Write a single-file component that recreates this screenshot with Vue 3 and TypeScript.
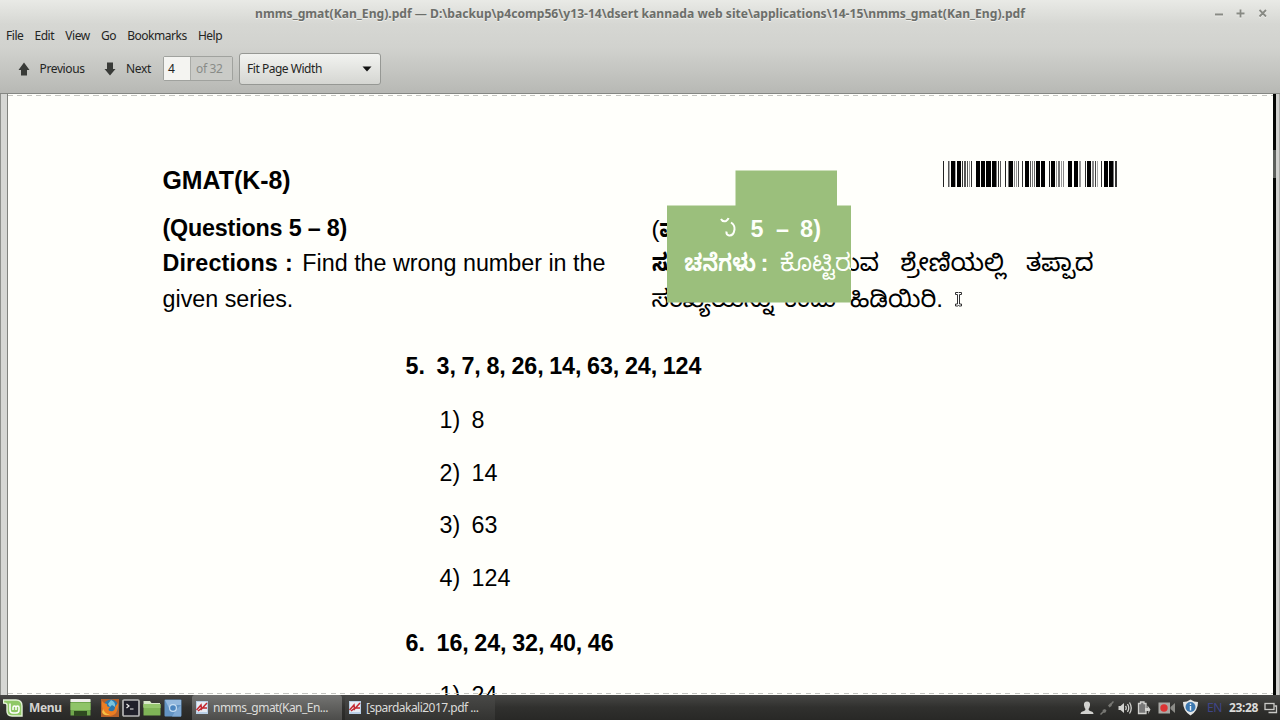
<script setup lang="ts">
interface Word {
  text: string
  x: number
  w: number
  bold?: boolean
}

const menus = ['File', 'Edit', 'View', 'Go', 'Bookmarks', 'Help']

const options = [
  { n: '1)', value: '8' },
  { n: '2)', value: '14' },
  { n: '3)', value: '63' },
  { n: '4)', value: '124' },
]

const tasks = [
  { title: 'nmms_gmat(Kan_En...', active: true },
  { title: '[spardakali2017.pdf ...', active: false },
]

// x and w are relative to the left edge of the Kannada column
const lines: { y: number; words: Word[] }[] = [
  {
    y: 37,
    words: [
      { text: '(', x: 0.5, w: 8 },
      { text: 'ಪ್ರಶ್ನೆಗಳು', x: 8.5, w: 77, bold: true },
      { text: '5', x: 99.5, w: 13, bold: true },
      { text: '–', x: 125, w: 13, bold: true },
      { text: '8)', x: 149, w: 21, bold: true },
    ],
  },
  {
    y: 71,
    words: [
      { text: 'ಸೂಚನೆಗಳು', x: 1, w: 104, bold: true },
      { text: ':', x: 109.5, w: 8, bold: true },
      { text: 'ಕೊಟ್ಟಿರುವ', x: 129, w: 99 },
      { text: 'ಶ್ರೇಣಿಯಲ್ಲಿ', x: 249.5, w: 105 },
      { text: 'ತಪ್ಪಾದ', x: 375, w: 67.5 },
    ],
  },
  {
    y: 106.5,
    words: [
      { text: 'ಸಂಖ್ಯೆಯನ್ನು', x: 0.5, w: 122 },
      { text: 'ಕಂಡು', x: 133, w: 52 },
      { text: 'ಹಿಡಿಯಿರಿ.', x: 199, w: 93 },
    ],
  },
]

// [offset, width, shade] of the barcode strokes
const bars: [number, number, string][] = [
  [0, 1, '#222'], [5, 1, '#555'], [6, 1, '#aaa'], [8, 4, '#000'], [12, 1, '#aaa'], [14, 4, '#000'],
  [19, 1, '#333'], [21, 2, '#555'], [24, 1, '#555'], [26, 1, '#999'], [28, 1, '#333'],
  [33, 4, '#000'], [38, 4, '#000'], [43, 5, '#000'], [49, 4, '#000'], [53, 1, '#777'], [55, 1, '#333'], [57, 1, '#555'],
  [62, 1, '#222'], [65, 1, '#777'], [66, 4, '#000'], [71, 1, '#888'], [73, 1, '#999'], [75, 1, '#555'],
  [79, 1, '#333'], [82, 4, '#000'], [87, 1, '#555'], [89, 1, '#777'], [91, 1, '#666'], [93, 4, '#000'], [98, 4, '#000'],
  [106, 1, '#222'], [108, 4, '#000'], [113, 1, '#999'], [115, 2, '#777'], [118, 1, '#999'], [120, 1, '#888'],
  [125, 4, '#000'], [131, 4, '#000'], [136, 2, '#999'],
  [142, 1, '#333'], [144, 4, '#000'], [149, 2, '#888'], [152, 1, '#444'], [154, 1, '#aaa'],
  [158, 1, '#333'], [161, 4, '#000'], [166, 4, '#000'], [170, 1, '#777'], [172, 2, '#333'],
]
</script>

<template>
  <div class="window">
    <header class="chrome">
      <div class="titlebar">
        <span class="title">nmms_gmat(Kan_Eng).pdf — D:\backup\p4comp56\y13-14\dsert kannada web site\applications\14-15\nmms_gmat(Kan_Eng).pdf</span>
        <svg class="controls" width="56" height="13" viewBox="0 0 56 13">
          <path d="M1 8.500H9M22.500 7.500H30.500M26.500 3.500V11.500M45.500 4L52 10.500M52 4L45.500 10.500" fill="none" stroke="#f5f5f3" stroke-width="1.6" />
          <path d="M1 7.500H9M22.500 6.500H30.500M26.500 2.500V10.500M45.500 3L52 9.500M52 3L45.500 9.500" fill="none" stroke="#888a84" stroke-width="1.8" />
        </svg>
      </div>
      <nav class="menubar">
        <span v-for="m in menus" :key="m">{{ m }}</span>
      </nav>
      <div class="toolbar">
        <div class="tool prev">
          <svg width="12" height="14" viewBox="0 0 12 14"><path d="M6 .5L11.500 8H9V13.500H3V8H.5Z" fill="#393b38" /></svg>
          <span>Previous</span>
        </div>
        <div class="tool next">
          <svg width="12" height="14" viewBox="0 0 12 14"><path d="M6 13.500L11.500 7H9V.5H3V7H.5Z" fill="#393b38" /></svg>
          <span>Next</span>
        </div>
        <div class="pager"><span class="current">4</span><span class="total">of 32</span></div>
        <div class="combo">
          <span>Fit Page Width</span>
          <svg width="10" height="6" viewBox="0 0 10 6"><path d="M.5 .5H9.500L5 5.500Z" fill="#111" /></svg>
        </div>
      </div>
    </header>

    <div class="viewer">
      <div class="gutter"></div>
      <main class="page">
        <div class="page-head">
          <h1>GMAT(K-8)</h1>
          <svg width="174" height="26" viewBox="0 0 174 26" shape-rendering="crispEdges">
            <rect v-for="[x, w, c] in bars" :key="x" :x="x" y="0" :width="w" height="26" :fill="c" />
          </svg>
        </div>
        <div class="columns">
          <section class="english">
            <p class="range"><b>(Questions 5 – 8)</b></p>
            <p class="directions"><b>Directions</b><b>:</b><span>Find the wrong number in the</span></p>
            <p>given series.</p>
          </section>
          <svg class="kannada" width="460" height="120" viewBox="0 0 460 120">
            <defs>
              <!-- ink is black outside the selection and white on the words it has repainted -->
              <pattern id="ink" patternUnits="userSpaceOnUse" width="460" height="140">
                <path d="M0 0H460V140H0ZM16 6V102.500H200V6Z" fill-rule="evenodd" fill="#000" />
                <path d="M97 6H200V85H33V47H97Z" fill="#fdfffa" />
              </pattern>
            </defs>
            <path d="M84.500 -29.500H186V5.500H200V102.500H16V5.500H84.500Z" fill="#9bbf7c" />
            <template v-for="line in lines" :key="line.y">
              <text
                v-for="w in line.words"
                :key="w.text"
                :x="w.x"
                :y="line.y"
                :textLength="w.w"
                lengthAdjust="spacingAndGlyphs"
                :class="{ bold: w.bold }"
              >{{ w.text }}</text>
            </template>
            <!-- tail of the word that the highlight cuts off -->
            <path d="M70 19Q71.500 22 75 21Q77 20 77.500 18M80 22.500Q84 25 83.500 29.500Q82.500 36 78 35.500Q75 35 75.500 31.500" class="vowel" />
            <path d="M304.500 92.500H307L307.500 93L308 92.500H310.500V94.500H308.500V104H310.500V106H308L307.500 105.500L307 106H304.500V104H306.500V94.500H304.500Z" fill="#fff" stroke="#333" />
          </svg>
        </div>
        <section class="questions">
          <h2><span>5.</span>3, 7, 8, 26, 14, 63, 24, 124</h2>
          <div v-for="o in options" :key="o.n" class="option"><span>{{ o.n }}</span>{{ o.value }}</div>
          <h2 class="second"><span>6.</span>16, 24, 32, 40, 46</h2>
          <div class="option last"><span>1)</span>24</div>
        </section>
      </main>
      <div class="scrollbar"><div class="thumb"></div></div>
    </div>

    <footer class="panel">
      <div class="start">
        <svg width="20" height="18" viewBox="0 0 20 18">
          <path d="M.5 1H13Q19 1 19 7V17H9Q4 17 4 12V6Q4 4 .5 4Z" fill="#8fc866" stroke="#e4f3d8" stroke-width="1.4" />
          <path d="M7 4.500V11Q7 14 10 14H13Q16 14 16 11V8.500Q16 7 14.500 7T13 8.500V11M13 8.500Q13 7 11.500 7T10 8.500V11" fill="none" stroke="#fff" stroke-width="1.5" />
        </svg>
        <span>Menu</span>
      </div>
      <svg class="desktop" width="21" height="17" viewBox="0 0 21 17">
        <rect x=".5" y="1" width="20" height="15.500" fill="#6fa74c" />
        <rect x=".5" y="4" width="20" height="7" fill="#8fc468" />
        <rect x=".5" y="0" width="20" height="3" fill="#eeeeea" />
        <path d="M4 12H17V17H4Z" fill="#2f4a20" />
      </svg>
      <div class="launchers">
        <svg width="18" height="18" viewBox="0 0 18 18">
          <rect width="18" height="18" fill="#b4602a" />
          <circle cx="10" cy="8" r="7.500" fill="#2b78ad" />
          <path d="M10 1Q15 3 14 8L11 6L9 8L7 5Z" fill="#79c4dd" />
          <path d="M1 2Q3 5 6 5Q5 8 9 8Q6 11 9 12Q14 13 14 8Q16 5 17 4Q18 16 9 17Q0 16 1 2Z" fill="#ec7d22" />
          <path d="M2 10Q4 15 9 15.500Q3 18 1 13Z" fill="#f6c044" />
        </svg>
        <svg width="18" height="18" viewBox="0 0 18 18">
          <rect x="1" y="1" width="16" height="16" rx="1" fill="#20202a" stroke="#b5b5b5" stroke-width="1.700" />
          <path d="M4.500 5L7 7L4.500 9M8 10H11.500" fill="none" stroke="#ededed" stroke-width="1.200" />
        </svg>
        <svg width="18" height="18" viewBox="0 0 18 18">
          <path d="M.5 2H7L8.500 4H17V8H.5Z" fill="#d9e8c9" />
          <rect x=".5" y="5" width="17" height="11.500" rx=".5" fill="#7fb457" />
          <rect x=".5" y="5" width="17" height="4" fill="#95c66e" />
        </svg>
        <svg width="18" height="18" viewBox="0 0 18 18">
          <rect x=".5" y=".5" width="17" height="17" rx="1" fill="#6394c4" />
          <path d="M1 1H17V6H9L5 9Z" fill="#94b9de" />
          <path d="M12 11L8 17.500H17V6Z" fill="#7fa9d4" />
          <circle cx="9" cy="9" r="4" fill="#c8def2" />
          <circle cx="9" cy="9" r="2.800" fill="#4c86c0" />
        </svg>
      </div>
      <div class="tasks">
        <div v-for="t in tasks" :key="t.title" class="task" :class="{ active: t.active }">
          <svg width="12" height="13" viewBox="0 0 12 13">
            <rect width="12" height="13" fill="#b9cfe6" />
            <rect x="1" y="1" width="10" height="10" fill="#e8ecf3" />
            <path d="M.5 9L5 4L5.500 8L11 2M2 10L6 7H11" fill="none" stroke="#c3262f" stroke-width="1.500" />
          </svg>
          <span>{{ t.title }}</span>
        </div>
      </div>
      <div class="tray">
        <svg width="14" height="14" viewBox="0 0 14 14"><path d="M7 .5Q10.500 .5 10 4.500Q9.500 7 8.500 8Q8.500 9.500 10 10Q13.500 10.500 13.500 13H.5Q.5 10.500 4 10Q5.500 9.500 5.500 8Q4.500 7 4 4.500Q3.500 .5 7 .5Z" fill="#d2d2cf" /></svg>
        <svg width="14" height="14" viewBox="0 0 14 14"><path d="M.5 13.500L3.500 10.500M13.500 .5L10.500 3.500" stroke="#777773" stroke-width="1.500" /><path d="M2.500 9L5 8L6.500 9.500L5.500 11.500L3.500 12ZM8 4.500L10 2.500L12.500 2L11.500 5L9.500 6.500Z" fill="#777773" /></svg>
        <svg class="volume" width="15" height="14" viewBox="0 0 15 14"><path d="M.5 5H2.500L6 2V12L2.500 9H.5Z" fill="#d2d2cf" /><path d="M7.500 5Q9 7 7.500 9M9.500 3Q12 7 9.500 11M11.500 1.500Q15 7 11.500 12.500" fill="none" stroke="#d2d2cf" stroke-width="1.300" /></svg>
        <svg class="battery" width="14" height="14" viewBox="0 0 14 14"><path d="M1.500 2.500H3.500V1H7V2.500H9V12.500H1.500Z" fill="#777" stroke="#d2d2cf" stroke-width="1.300" /><path d="M8 7H10.500V4.500L13.500 8.500L11 13L11.500 10H8Z" fill="#d2d2cf" /></svg>
        <svg class="recorder" width="17" height="14" viewBox="0 0 17 14"><rect x=".5" y="1.500" width="11.500" height="11" fill="#aaa9a5" /><path d="M12.500 6L17 2V12L12.500 8Z" fill="#8b8b87" /><circle cx="6" cy="7" r="3.700" fill="#dc3434" /></svg>
        <svg class="shield" width="17" height="17" viewBox="0 0 17 17"><path d="M8.500 .5Q12 3 16 3Q16 12 8.500 16.500Q1 12 1 3Q5 3 8.500 .5Z" fill="#e4e6e6" /><circle cx="8.500" cy="8" r="5" fill="#3c78b0" /><path d="M8.500 7V11.500M8.500 4.500V6" stroke="#e8f2fb" stroke-width="1.400" /></svg>
        <span class="lang">EN</span>
        <span class="clock">23:28</span>
        <svg width="14" height="12" viewBox="0 0 14 12"><path d="M4.500 10.500H12.500V4H10.500" fill="none" stroke="#c9c9c6" stroke-width="1.300" /><rect x="1" y="1.500" width="9" height="6" fill="#353533" stroke="#c9c9c6" stroke-width="1.300" /></svg>
      </div>
    </footer>
  </div>
</template>

<style>
body { background: #fffffb; overflow: hidden; }
</style>

<style scoped>
.window { width: 1280px; height: 720px; overflow: hidden; display: flex; flex-direction: column; font-family: "Noto Sans", sans-serif; font-size: 12px; letter-spacing: -0.37px; color: #242523; }
svg { display: block; flex: none; }

.chrome { height: 94px; box-sizing: border-box; flex: none; display: flex; flex-direction: column; background: linear-gradient(#e9eae6 0, #d6d7d3 24px, #d1d2ce 48px, #b8b9b5 92px); border-bottom: 1px solid #858783; }
.titlebar { height: 26px; display: grid; grid-template-columns: 68px 1fr 68px; align-items: center; }
.title { grid-column: 2; justify-self: center; font-weight: bold; font-size: 12.12px; letter-spacing: 0; color: #6c6e6a; text-shadow: 0 1px 0 #eeefeb; white-space: nowrap; }
.controls { margin-left: 2px; }
.menubar { height: 18px; display: flex; align-items: center; gap: 11.200px; padding-left: 6px; letter-spacing: -0.47px; }
.toolbar { height: 49px; display: flex; align-items: center; }
.tool { display: flex; align-items: center; }
.prev { padding-left: 17.500px; gap: 10px; width: 86.500px; }
.next { gap: 10px; width: 59px; }
.pager { display: flex; width: 68px; height: 23px; border: 1px solid #a0a29e; border-radius: 2px; line-height: 23px; }
.current { width: 27px; box-sizing: border-box; padding-left: 4px; background: #f4f4f1; border-right: 1px solid #a9aba7; color: #222; }
.total { flex: 1; padding-left: 5px; color: #898b87; background: #cacbc7; }
.combo { box-sizing: border-box; width: 142px; height: 32px; margin-left: 6px; padding: 0 8px 0 7px; letter-spacing: -0.47px; display: flex; align-items: center; justify-content: space-between; border: 1px solid #969894; border-radius: 3px; background: linear-gradient(#f2f3f0, #d5d6d2); }

.viewer { height: 601px; flex: none; display: flex; background: #d6d7d4; }
.gutter { width: 8px; box-sizing: border-box; border-left: 1px solid #8e908c; border-right: 1px solid #80827e; }
.page { position: relative; flex: 1; overflow: hidden; background: #fffffb; color: #000; font-family: "Liberation Sans", Arial, sans-serif; font-size: 23.3px; letter-spacing: 0; }
.page::before, .page::after { content: ""; position: absolute; left: 0; right: 0; height: 1px; background: repeating-linear-gradient(90deg, #c4c5c0 0 5px, transparent 5px 9.5px); }
.page::before { top: 1px; }
.page::after { bottom: 1px; }
.page-head { display: flex; justify-content: space-between; padding: 67px 156px 0 154.500px; height: 49px; }
h1 { margin: 4px 0 0; font-size: 24.9px; line-height: 30px; }
.columns { display: flex; height: 136px; }
.english { width: 488.500px; padding: 1px 0 0 154.500px; }
p { margin: 0; line-height: 35.4px; white-space: nowrap; }
.range { letter-spacing: -0.18px; }
.directions { display: flex; }
.directions b { letter-spacing: 0.15px; }
.directions b:nth-child(2) { margin-left: 7px; }
.directions span { margin-left: 9.500px; }
.kannada { overflow: visible; margin-top: -10px; }
.kannada text { font: 24px "Liberation Sans", "Noto Sans Kannada", sans-serif; fill: url(#ink); }
.kannada .bold { font-weight: bold; }
.vowel { fill: none; stroke: #fdfffa; stroke-width: 2; }
.questions { padding-left: 397.500px; }
h2 { margin: 0 0 8.400px; font-size: 23.3px; line-height: 40px; display: flex; word-spacing: -0.7px; letter-spacing: -0.08px; }
h2 span { width: 31px; }
.option { display: flex; padding-left: 34px; line-height: 52.5px; }
.option span { width: 32px; }
.second { margin: 18.2px 0 6px; }
.scrollbar { width: 7px; box-sizing: border-box; border-left: 3px solid #050705; border-right: 1px solid #a9aaa6; background: #d0d1ce; padding-top: 56px; }
.thumb { width: 3px; height: 28px; margin-left: -3px; background: #5b5e5a; }

.panel { height: 25px; flex: none; display: flex; align-items: center; background: linear-gradient(#474745, #30302e 50%, #282826); color: #dcdcda; }
.start { display: flex; align-items: center; gap: 6px; width: 67px; padding-left: 3px; font-weight: bold; color: #d4d4d1; }
.launchers { display: flex; gap: 3px; margin-left: 10px; }
.tasks { display: flex; margin-left: 10px; gap: 3px; align-self: stretch; }
.task { width: 150px; box-sizing: border-box; padding-left: 4px; display: flex; align-items: center; gap: 5px; white-space: nowrap; letter-spacing: -0.52px; background: linear-gradient(#494947, #333331); border-radius: 3px 3px 0 0; }
.task.active { background: linear-gradient(#747472, #4c4c4a); }
.tray { margin-left: auto; display: flex; align-items: center; gap: 6px; padding-right: 2px; }
.volume { margin-left: -2px; }
.battery { margin-left: -2px; }
.recorder { margin-left: 1px; }
.shield { margin-left: 1px; }
.lang { color: #3f4589; margin: 0 1px 0 2px; }
.clock { font-weight: bold; }
</style>
